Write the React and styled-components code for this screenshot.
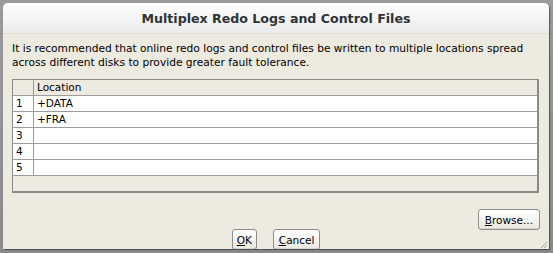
import styled, { createGlobalStyle } from 'styled-components'

const Global = createGlobalStyle`
    html, body {
        margin: 0;
        padding: 0;
    }
    body {
        width: 553px;
        height: 253px;
        overflow: hidden;
        background: #8e8e8e;
        font-family: "DejaVu Sans", sans-serif;
    }
`

const Desktop = styled.div`
    width: 553px;
    height: 253px;
    padding: 3px 4px 4px 3px;
    box-sizing: border-box;
    background: linear-gradient(#9a9a9a, #8a8a8a);
`

const Dialog = styled.div`
    height: 100%;
    display: flex;
    flex-direction: column;
    border-radius: 5px 5px 0 0;
    background: #edeae0;
    box-shadow: 1px 1px 1px rgba(0, 0, 0, 0.45);
    overflow: hidden;
`

const TitleBar = styled.div`
    height: 30px;
    flex: none;
    display: flex;
    align-items: center;
    justify-content: center;
    background: linear-gradient(#fefefe, #f3f3f3 60%, #ebebeb);
    border-bottom: 1px solid #e0ddd3;
    font-weight: bold;
    font-size: 12.6px;
    color: #2e3436;
`

const Body = styled.div`
    flex: 1;
    display: flex;
    flex-direction: column;
    padding: 8px 9px 0 9px;
    position: relative;
`

const Intro = styled.p`
    margin: 0;
    font-size: 10.65px;
    line-height: 14px;
    color: #000;
`

const Table = styled.div`
    margin-top: 9px;
    width: 527px;
    height: 114px;
    box-sizing: border-box;
    border: 1px solid #8a8a8a;
    border-bottom-width: 2px;
    border-right-width: 2px;
    background: #edeae0;
    display: flex;
    flex-direction: column;
`

const Row = styled.div`
    display: grid;
    grid-template-columns: 20px 1fr;
    height: 16px;
    box-sizing: border-box;
    border-bottom: 1px solid #9c9c9c;
    background: ${p => (p.$head ? '#edeae0' : '#fff')};
`

const Cell = styled.div`
    font-size: 10.5px;
    line-height: 15px;
    padding-left: 3px;
    color: #000;
    border-left: ${p => (p.$first ? 'none' : '1px solid #9c9c9c')};
    white-space: nowrap;
`

const ButtonRow = styled.div`
    display: flex;
    justify-content: ${p => p.$align || 'center'};
    gap: 16px;
    margin-top: ${p => p.$top || '0'};
`

const Button = styled.button`
    height: 21px;
    padding: 0 ${p => p.$pad || '6px'};
    font-family: "DejaVu Sans", sans-serif;
    font-size: 10.5px;
    color: #000;
    border: 1px solid #8e8e8e;
    border-radius: 3px;
    background: linear-gradient(#ffffff, #eae8e2);
    box-shadow: inset 0 -1px 0 #d8d5cc;

    u {
        text-decoration: underline;
    }
`

const Grip = styled.svg`
    position: absolute;
    right: 1px;
    bottom: 1px;
`

const rows = [
    { n: 1, loc: '+DATA' },
    { n: 2, loc: '+FRA' },
    { n: 3, loc: '' },
    { n: 4, loc: '' },
    { n: 5, loc: '' },
]

const App = () => {
    return (
        <>
            <Global />
            <Desktop>
                <Dialog>
                    <TitleBar>Multiplex Redo Logs and Control Files</TitleBar>
                    <Body>
                        <Intro>
                            It is recommended that online redo logs and control files be written to multiple locations spread
                            <br />
                            across different disks to provide greater fault tolerance.
                        </Intro>
                        <Table>
                            <Row $head>
                                <Cell $first />
                                <Cell>Location</Cell>
                            </Row>
                            {rows.map(r => (
                                <Row key={r.n}>
                                    <Cell $first>{r.n}</Cell>
                                    <Cell>{r.loc}</Cell>
                                </Row>
                            ))}
                        </Table>
                        <ButtonRow $align="flex-end" $top="16px">
                            <Button><u>B</u>rowse...</Button>
                        </ButtonRow>
                        <ButtonRow $top="-1px">
                            <Button $pad="4px"><u>O</u>K</Button>
                            <Button $pad="5px"><u>C</u>ancel</Button>
                        </ButtonRow>
                        <Grip width="10" height="10" viewBox="0 0 10 10">
                            <path d="M9 3 L3 9 M9 6 L6 9" stroke="#a8a59c" strokeWidth="1" />
                        </Grip>
                    </Body>
                </Dialog>
            </Desktop>
        </>
    )
}

export default App
